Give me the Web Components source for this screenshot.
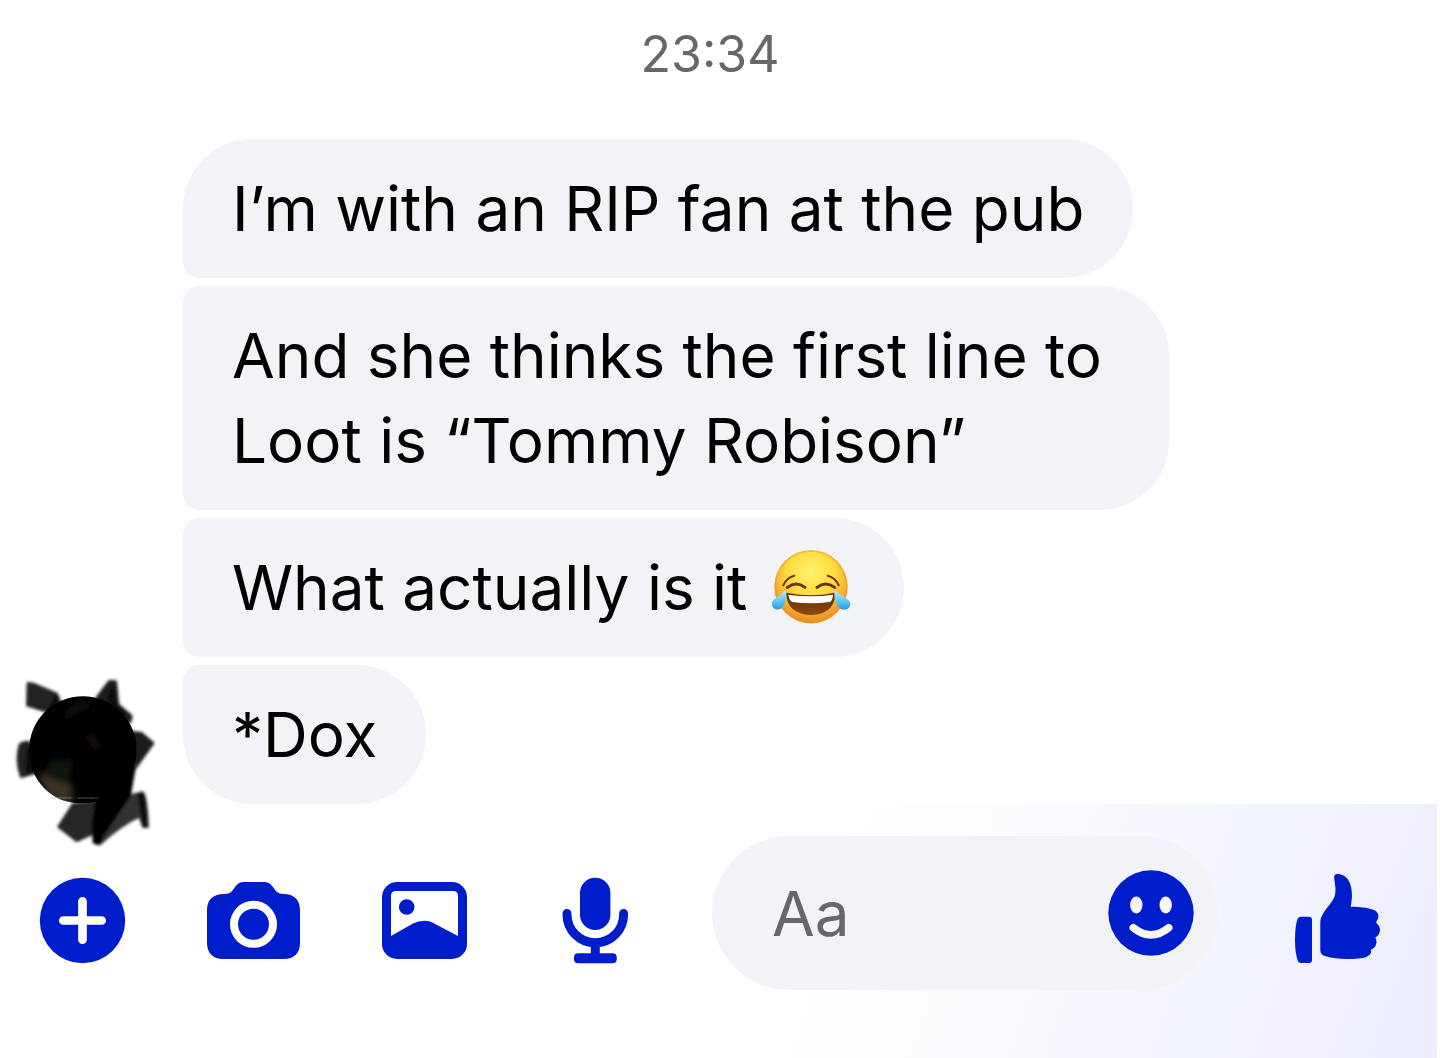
<!DOCTYPE html>
<html lang="en">
<head>
<meta charset="utf-8">
<meta name="viewport" content="width=device-width, initial-scale=1">
<title>Chat</title>
<style>
  body { margin: 0; background: #fff; font-family: Inter, "Liberation Sans", sans-serif; }
</style>
</head>
<body>
<chat-thread time="23:34">
  <chat-message position="first">I’m with an RIP fan at the pub</chat-message>
  <chat-message position="middle">And she thinks the first line to Loot is “Tommy Robison”</chat-message>
  <chat-message position="middle">What actually is it <joy-emoji></joy-emoji></chat-message>
  <chat-message position="last"><chat-avatar slot="avatar"></chat-avatar>*Dox</chat-message>
</chat-thread>
<chat-composer></chat-composer>

<script>
const ICONS = {
  plus: `
    <circle cx="46.5" cy="46.5" r="42.7"/>
    <path d="M27.3 46.5H65.7M46.5 27.3V65.7" stroke="#fff" stroke-width="8.7" stroke-linecap="round"/>`,
  camera: `
    <path d="M17 20C24 20 25 17 28 13C31 9 33 8 38 8H56C61 8 63 9 66 13C69 17 70 20 77 20C87 20 93 26 93 36V69C93 79 87 85 77 85H16C6 85 0 79 0 69V36C0 26 6 20 17 20Z"/>
    <circle cx="46.5" cy="50.3" r="19.5" fill="none" stroke="#fff" stroke-width="8"/>`,
  gallery: `
    <rect x="4" y="8" width="85" height="77" rx="15"/>
    <path d="M13 62V22Q13 17 18 17H75Q80 17 80 22V62L58 50.5Q53 46.7 46.5 46.7Q40 46.7 35 49.5Z" fill="#fff"/>
    <circle cx="28.7" cy="33" r="7.8"/>`,
  mic: `
    <rect x="31" y="3.7" width="30.4" height="52.3" rx="15.2"/>
    <path d="M18 39.5V40.5A28.3 28.3 0 0 0 74.6 40.5V39.5M46.3 69V82" fill="none" stroke="currentColor" stroke-width="9" stroke-linecap="round"/>
    <rect x="25" y="79.3" width="42.7" height="10" rx="4"/>`,
  smile: `
    <circle cx="47" cy="47" r="42.7"/>
    <ellipse cx="32.3" cy="39" rx="6.2" ry="8.4" fill="#f5f7fb"/>
    <ellipse cx="61.7" cy="39" rx="6.2" ry="8.4" fill="#f5f7fb"/>
    <path d="M29.3 61.7Q47 76 64.7 61.7" fill="none" stroke="#f5f7fb" stroke-width="7.6" stroke-linecap="round"/>`,
  like: `
    <path d="M10 42.7H18Q21 42.7 21 46V85.5Q21 89 18 89H10Q7.5 89 6.5 86Q4 78 4 66Q4 52 6.5 45Q7.5 42.7 10 42.7Z"/>
    <path d="M46 0C43.5 0.3 43 2 43.2 4.5C43.7 9 45.5 16 43.7 22C41.5 28.5 35.5 33.5 32.3 39.3C30.2 43 29.3 45 29.3 49V75C29.3 79 30.5 81 34 82C41 84.3 48 85 56 85C64 85 71 84.6 75.7 82.7C79.5 81 81 78.5 79.7 75.8C85 74 87 68.5 84.3 63.5C90 61 90.5 53 86 49.8C85.3 49.2 85 48 86 46.5C88.5 43.5 87.5 39 84.5 36.8C81 34.2 70 32.8 59.7 32.7C60.8 27 61.3 22 60.7 17C60 10 57.5 4.5 53 1.8C50.5 .3 48 -.2 46 0Z"/>`
};

class ChatThread extends HTMLElement {
  constructor() {
    super();
    this.attachShadow({ mode: 'open' });
  }

  connectedCallback() {
    this.shadowRoot.innerHTML = `
      <style>
        :host { display: block; padding: 24px 20px 0 29px; }
        time { display: block; margin: 0 0 55px -29px; text-align: center; font-size: 50px; line-height: 60px; color: #65676b; }
        .messages { display: flex; flex-direction: column; gap: 8px; }
      </style>
      <time>${this.getAttribute('time')}</time>
      <div class="messages"><slot></slot></div>
    `;
  }
}

customElements.define('chat-thread', ChatThread);

class ChatMessage extends HTMLElement {
  constructor() {
    super();
    this.attachShadow({ mode: 'open' });
  }

  connectedCallback() {
    this.shadowRoot.innerHTML = `
      <style>
        :host { display: flex; align-items: flex-end; gap: 46px; }
        .avatar { flex: none; width: 108px; }
        .bubble {
          box-sizing: border-box;
          max-width: 986px;
          padding: 27px 49px;
          border-radius: 16px 69px 69px 16px;
          background: #f1f3f7;
          color: #000;
          font-size: 62px;
          line-height: 85px;
        }
        :host([position="first"]) .bubble { border-top-left-radius: 69px; }
        :host([position="last"]) .bubble { border-bottom-left-radius: 69px; }
      </style>
      <div class="avatar"><slot name="avatar"></slot></div>
      <div class="bubble"><slot></slot></div>
    `;
  }
}

customElements.define('chat-message', ChatMessage);

class ChatAvatar extends HTMLElement {
  constructor() {
    super();
    this.attachShadow({ mode: 'open' });
  }

  connectedCallback() {
    // The strokes run past the circle, so the svg must not clip
    this.shadowRoot.innerHTML = `
      <style>
        :host { display: block; }
        svg { display: block; width: 100%; overflow: visible; }
      </style>
      <svg viewBox="85 96 324 324" role="img" aria-label="Avatar">
        <defs>
          <filter id="soft" x="-20%" y="-20%" width="140%" height="140%"><feGaussianBlur stdDeviation="4"/></filter>
          <filter id="glow" x="-50%" y="-50%" width="200%" height="200%"><feGaussianBlur stdDeviation="9"/></filter>
          <clipPath id="face"><path d="M85 258A161 161 0 0 1 408 258C408 330 350 418 247 418C215 418 180 410 155 392C112 364 85 315 85 258Z"/></clipPath>
        </defs>
        <g filter="url(#soft)" stroke-width="8" stroke-linejoin="round">
          <path d="M82 58L98 60L168 90L177 112L138 142L80 124Z" fill="#242424" stroke="#242424"/>
          <path d="M138 142L165 92L177 112L172 130Z" fill="#0c0c0c"/>
          <path d="M288 102L326 52L345 53L352 122L392 156L388 174L330 160Z" fill="#1e1e1e" stroke="#1e1e1e"/>
          <path d="M318 100L336 60L350 122L380 150L330 160Z" fill="#0a0a0a"/>
          <path d="M58 242Q66 234 84 234L104 326L62 338Q44 290 58 242Z" fill="#222" stroke="#222"/>
          <path d="M84 236L104 326L78 330Q70 280 84 236Z" fill="#0c0c0c"/>
          <path d="M390 204L422 208L457 238L402 314L380 330Z" fill="#1b1b1b" stroke="#1b1b1b"/>
          <path d="M218 420L174 488L228 530L278 508L340 410Z" fill="#252525" stroke="#252525"/>
          <path d="M404 300L386 396L426 386Q437 396 441 488L428 488L417 456Q360 482 298 539L282 534L279 485L290 400Z" fill="#303030" stroke="#303030"/>
          <path d="M290 390L400 310L386 395L305 516L294 540L280 535L278 480Z" fill="#050505" stroke="#050505"/>
          <path d="M410 388L426 386Q437 396 440 488L428 488L417 440Z" fill="#101010"/>
        </g>
        <g clip-path="url(#face)">
          <rect x="80" y="90" width="340" height="340" fill="#010101"/>
          <g filter="url(#glow)">
            <path d="M110 325L215 360V425L145 405Z" fill="#3a3220"/>
            <path d="M150 290L215 285L208 345L130 330Z" fill="#10120e"/>
            <path d="M182 160L235 115L275 120L205 160Z" fill="#17150f"/>
            <path d="M250 215L275 208L305 250L285 262Z" fill="#170e08"/>
          </g>
        </g>
        <path d="M151 400H212M232 404H290" stroke="#b5b3ae" stroke-width="14" stroke-dasharray="7 3 3 5" opacity=".5" filter="url(#soft)"/>
      </svg>
    `;
  }
}

customElements.define('chat-avatar', ChatAvatar);

class JoyEmoji extends HTMLElement {
  constructor() {
    super();
    this.attachShadow({ mode: 'open' });
  }

  connectedCallback() {
    this.shadowRoot.innerHTML = `
      <style>
        :host { display: inline-block; margin: 0 4px 0 6px; vertical-align: -14px; line-height: 0; }
        svg { width: 80px; height: 75px; }
      </style>
      <svg viewBox="66 46 240 225" role="img" aria-label="😂">
        <defs>
          <radialGradient id="skin" cx=".5" cy=".3" r=".72">
            <stop offset="0" stop-color="#fff36a"/>
            <stop offset=".45" stop-color="#fddb40"/>
            <stop offset=".8" stop-color="#f5a42c"/>
            <stop offset="1" stop-color="#e88421"/>
          </radialGradient>
          <linearGradient id="mouth" x1="0" y1="0" x2="0" y2="1">
            <stop offset="0" stop-color="#5d2c0b"/>
            <stop offset="1" stop-color="#8c4a0e"/>
          </linearGradient>
          <linearGradient id="tear" x1="0" y1="0" x2="0" y2="1">
            <stop offset="0" stop-color="#b9ecfb"/>
            <stop offset=".55" stop-color="#62c9f4"/>
            <stop offset="1" stop-color="#249cdf"/>
          </linearGradient>
        </defs>
        <circle cx="186" cy="159" r="110" fill="url(#skin)"/>
        <circle cx="186" cy="159" r="107" fill="none" stroke="#eb9427" stroke-width="5" opacity=".5"/>
        <g fill="none" stroke="#693607" stroke-linecap="round">
          <path d="M103 155Q112 132 136 126M269 155Q260 132 236 126" stroke-width="6"/>
          <path d="M115 161Q142 141 168 161M204 161Q230 141 257 161" stroke-width="9"/>
        </g>
        <path d="M112 177Q186 192 258 177Q260 240 186 244Q112 240 112 177Z" fill="url(#mouth)"/>
        <path d="M118 183Q186 193 252 183Q251 201 242 205Q186 213 130 205Q120 200 118 183Z" fill="#fff"/>
        <path d="M110 169C114 185 110 208 101 220C91 233 70 229 69 212C67 194 94 188 110 169Z" fill="url(#tear)"/>
        <path d="M257 169C253 185 260 208 269 220C280 233 303 229 304 212C305 194 274 188 257 169Z" fill="url(#tear)"/>
      </svg>
    `;
  }
}

customElements.define('joy-emoji', JoyEmoji);

class IconButton extends HTMLElement {
  constructor() {
    super();
    this.attachShadow({ mode: 'open' });
  }

  connectedCallback() {
    this.shadowRoot.innerHTML = `
      <style>
        :host { display: block; flex: none; }
        button { display: block; padding: 0; border: 0; background: none; color: #001dcc; cursor: pointer; }
        svg { display: block; width: 94px; height: 94px; fill: currentColor; overflow: visible; }
      </style>
      <button type="button" aria-label="${this.getAttribute('label')}">
        <svg viewBox="0 0 94 94" aria-hidden="true">${ICONS[this.getAttribute('icon')]}</svg>
      </button>
    `;
  }
}

customElements.define('icon-button', IconButton);

class ChatComposer extends HTMLElement {
  constructor() {
    super();
    this.attachShadow({ mode: 'open' });
  }

  connectedCallback() {
    this.shadowRoot.innerHTML = `
      <style>
        :host {
          display: flex;
          align-items: center;
          margin-right: 3px;
          padding: 32px 52px 68px 36px;
          background: linear-gradient(109deg, #fff 56%, #fafbff 70%, #f2f4fe 84%, #ecedfb 100%);
        }
        .tools { display: flex; gap: 77px; padding-top: 16px; }
        .field {
          flex: 1;
          min-width: 0;
          display: flex;
          align-items: center;
          margin: 0 73px 0 69px;
          padding: 30px 20px 30px 60px;
          border-radius: 77px;
          background: #f1f3f6;
        }
        input {
          flex: 1;
          min-width: 0;
          height: 94px;
          padding: 0;
          border: 0;
          outline: 0;
          background: none;
          font: inherit;
          font-size: 62px;
          color: #000;
        }
        input::placeholder { color: #65676b; opacity: 1; }
        .like { padding-top: 16px; }
      </style>
      <div class="tools">
        <icon-button icon="plus" label="More"></icon-button>
        <icon-button icon="camera" label="Camera"></icon-button>
        <icon-button icon="gallery" label="Gallery"></icon-button>
        <icon-button icon="mic" label="Voice message"></icon-button>
      </div>
      <div class="field">
        <input type="text" placeholder="Aa" aria-label="Message">
        <icon-button icon="smile" label="Emoji"></icon-button>
      </div>
      <icon-button class="like" icon="like" label="Like"></icon-button>
    `;
  }
}

customElements.define('chat-composer', ChatComposer);
</script>
</body>
</html>
